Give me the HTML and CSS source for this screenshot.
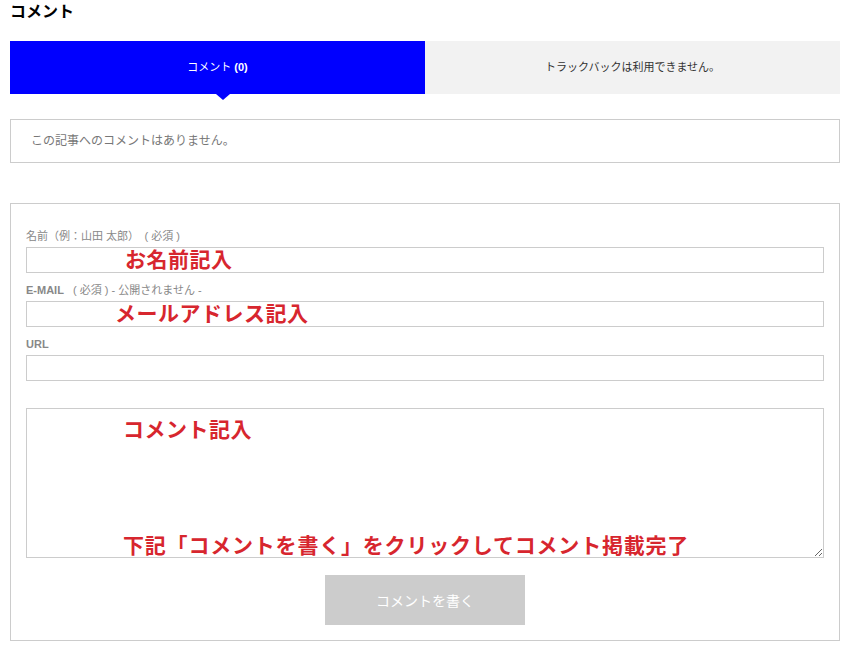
FILE: index.html
```html
<!DOCTYPE html>
<html lang="ja">
<head>
  <meta charset="UTF-8" />
  <meta name="viewport" content="width=device-width, initial-scale=1.0" />
  <title>コメント</title>
  <link rel="stylesheet" href="styles.css">
</head>
<body>
  <div class="comments">
    <h3 class="headline">コメント</h3>

    <div class="tabs">
      <div class="tab active">コメント <b>(0)</b></div>
      <div class="tab">トラックバックは利用できません。</div>
    </div>

    <div class="notice">この記事へのコメントはありません。</div>

    <form class="comment-form" onsubmit="return false">
      <label class="label">名前（例：山田 太郎）　( 必須 )</label>
      <div class="field">
        <input class="input" type="text" />
        <span class="memo memo-name">お名前記入</span>
      </div>

      <label class="label"><b>E-MAIL</b>&nbsp;&nbsp; ( 必須 ) - 公開されません -</label>
      <div class="field">
        <input class="input" type="text" />
        <span class="memo memo-mail">メールアドレス記入</span>
      </div>

      <label class="label"><b>URL</b></label>
      <div class="field">
        <input class="input" type="text" />
      </div>

      <div class="field field-text">
        <textarea class="textarea"></textarea>
        <span class="memo memo-text">コメント記入</span>
        <span class="memo memo-send">下記「コメントを書く」をクリックしてコメント掲載完了</span>
      </div>

      <button class="submit" type="submit">コメントを書く</button>
    </form>
  </div>
</body>
</html>
```

FILE: styles.css
```css
body {
  margin: 0;
  padding: 0;
  background-color: #fff;
  font-family: "Liberation Sans", "Noto Sans CJK JP", sans-serif;
  color: #333;
}
.comments {
  width: 830px;
  margin-left: 10px;
}
.headline {
  margin: 0;
  font-size: 16px;
  line-height: 24px;
  font-weight: bold;
  color: #000;
}
.tabs {
  display: flex;
  margin-top: 17px;
}
.tab {
  position: relative;
  flex: 1;
  height: 53px;
  line-height: 53px;
  text-align: center;
  font-size: 11px;
  background-color: #f2f2f2;
  color: #333;
}
.tab.active {
  background-color: #0000ff;
  color: #fff;
}
.tab.active::after {
  content: "";
  position: absolute;
  left: calc(50% + 5px);
  top: 53px;
  margin-left: -7px;
  border-left: 7px solid transparent;
  border-right: 7px solid transparent;
  border-top: 6px solid #0000ff;
}
.notice {
  margin-top: 25px;
  border: 1px solid #ccc;
  height: 42px;
  line-height: 42px;
  padding: 0 20px;
  font-size: 12px;
  color: #777;
}
.comment-form {
  margin-top: 40px;
  border: 1px solid #ccc;
  padding: 25px 15px 15px;
}
.label {
  display: block;
  font-size: 11px;
  line-height: 14px;
  height: 14px;
  margin: 10px 0 4px;
  color: #888;
}
.label:first-child {
  margin-top: 0;
}
.field {
  position: relative;
}
.input {
  display: block;
  box-sizing: border-box;
  width: 100%;
  height: 26px;
  margin: 0;
  border: 1px solid #ccc;
  padding: 0 6px;
  outline: none;
}
.field-text {
  margin-top: 27px;
}
.textarea {
  display: block;
  box-sizing: border-box;
  width: 100%;
  height: 150px;
  margin: 0;
  border: 1px solid #ccc;
  padding: 6px;
  outline: none;
}
.memo {
  position: absolute;
  font-family: "Noto Sans CJK JP", sans-serif;
  font-weight: bold;
  font-size: 21px;
  line-height: 21px;
  letter-spacing: 0.5px;
  color: #d7262e;
  white-space: nowrap;
  pointer-events: none;
}
.memo-name {
  left: 99px;
  top: 1px;
}
.memo-mail {
  left: 89px;
  top: 1px;
}
.memo-text {
  left: 97px;
  top: 10px;
}
.memo-send {
  left: 97px;
  top: 126px;
  letter-spacing: 0.8px;
}
.submit {
  display: block;
  width: 200px;
  height: 50px;
  margin: 17px auto 0;
  border: none;
  background-color: #ccc;
  color: #fff;
  font-family: "Noto Sans CJK JP", sans-serif;
  font-size: 14px;
  cursor: pointer;
}
```
